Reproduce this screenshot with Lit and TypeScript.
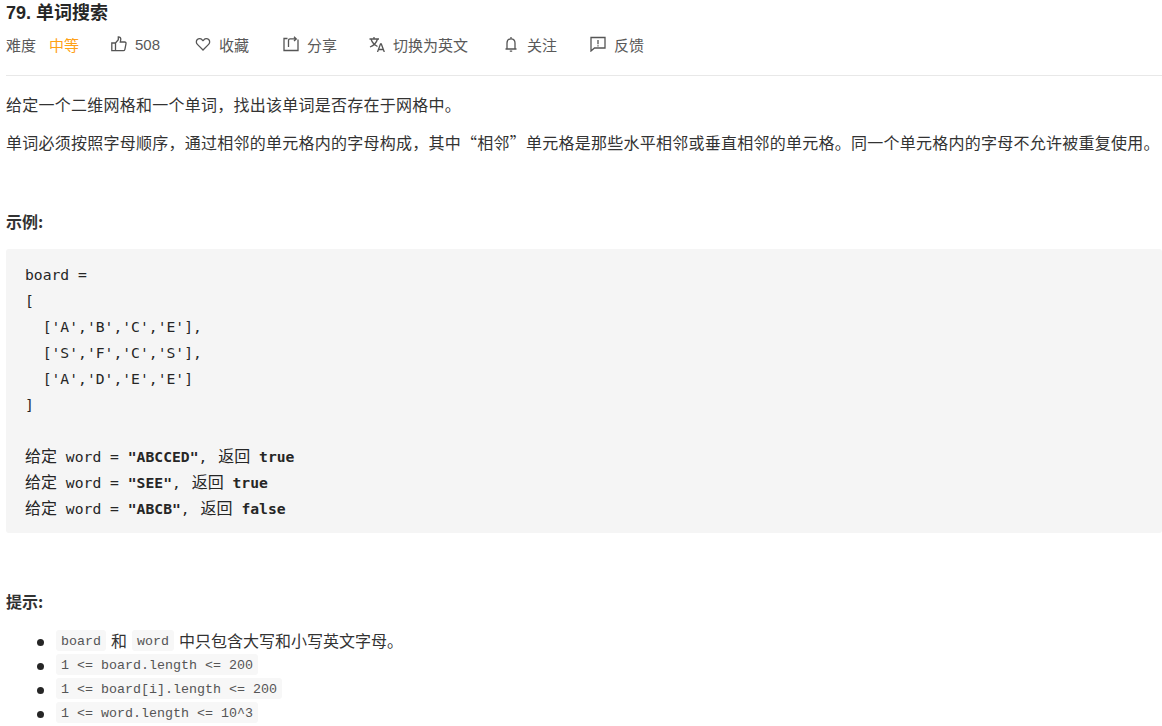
import { LitElement, html, css, svg } from "lit";
import { customElement } from "lit/decorators.js";

const icon = (body: unknown) => html`<svg class="ic" width="16" height="16" viewBox="0 0 16 16" fill="none" stroke="#555" stroke-width="1.3">${body}</svg>`;
const thumb = svg`<path d="M.8 7h3.700v7.700H.8zM4.500 7l2.800-3.300V.8c1.500 0 2.500 1 2.500 2.500L9.300 6h4.400c.9 0 1.500.8 1.300 1.600l-1.100 5.700c-.2.800-.8 1.400-1.600 1.400H4.500"/>`;
const heart = svg`<path d="M8 14 2.400 8.400C1 7 1 4.800 2.300 3.500c1.400-1.300 3.500-1.200 4.700.2L8 4.700l1-1c1.200-1.400 3.300-1.500 4.700-.2C15 4.800 15 7 13.600 8.400z"/>`;
const share = svg`<path d="M4.500 2.500H1v12h14V3.500M5.500 11V4.500c0-1 .7-1.600 1.600-1.600h5.900M11 .8l2.300 2.100L11 5"/>`;
const translate = svg`<path d="M.5 3h9.500M5 1v2M2 3c1 3.400 3.600 6 6.500 7.500M8.500 3C7.600 6.500 5 9.300 1 11M8.500 16l3-8h.8l3 8M9.700 13.500h4.600"/>`;
const bell = svg`<path d="M2.500 13h11M4 13V7c0-2.400 1.700-4.200 4-4.200s4 1.800 4 4.200v6M8 1v1.800M6.800 15.200h2.400"/>`;
const feedback = svg`<path d="M1 1.500h14V12H4.500L1 15zM8 4v4.200M8 9.300v1.300"/>`;

@customElement("app-root")
export class AppRoot extends LitElement {
  static styles = css`
    :host { display: block; height: 726px; overflow: hidden; background: #fff; padding: 0 0 0 6px; box-sizing: border-box;
      font-family: "Noto Sans CJK SC", "Liberation Sans", sans-serif; color: #333; font-size: 16px; }
    h4 { margin: 0; font-family: "Liberation Sans", "Noto Sans CJK SC", sans-serif; font-size: 18px; line-height: 26px; font-weight: 700; color: #262626; height: 26px; }
    .meta { display: flex; align-items: center; height: 24px; margin-top: 6px; color: #595959; font-size: 15px; font-family: "Liberation Sans", "Noto Sans CJK SC", sans-serif; }
    .meta .label { width: 43px; }
    .meta .level { color: #ffa116; width: 62px; }
    .item { display: flex; align-items: center; gap: 8px; }
    .ic { flex: none; }
    .i1 { width: 84px; } .i2 { width: 88px; } .i3 { width: 86px; } .i4 { width: 134px; } .i5 { width: 87px; }
    hr { border: 0; border-top: 1px solid #e8e8e8; margin: 19px 0 0; }
    p { margin: 0; line-height: 22px; letter-spacing: 0.25px; }
    .p1 { margin-top: 17px; }
    .p2 { margin-top: 16px; white-space: nowrap; }
    .head { font-weight: 700; margin-top: 57px; letter-spacing: 0; }
    pre { margin: 17px 0 0; background: #f5f5f5; border-radius: 3px; padding: 13px 19px 12px; height: 284px; box-sizing: border-box;
      font-family: "DejaVu Sans Mono", monospace; font-size: 14.7px; line-height: 26px; color: #262626; }
    pre b { font-weight: 700; }
    .cjk { font-family: "Noto Sans CJK SC", sans-serif; font-size: 16px; line-height: 1; }
    .ret { margin: 0 0 0 2px; }
    .head2 { margin-top: 57px; }
    ul { margin: 17px 0 0; padding: 0 0 0 50px; list-style: none; }
    li { line-height: 22px; height: 24px; position: relative; white-space: nowrap; display: flex; align-items: flex-start; gap: 5px; }
    li::before { content: ""; position: absolute; left: -19px; top: 9.5px; width: 7px; height: 7px; border-radius: 50%; background: #262626; }
    code { font-family: "Liberation Mono", monospace; font-size: 13.33px; line-height: 24px; height: 21px; margin-top: 1px; background: #f7f7f7; border-radius: 3px; padding: 0 5px; color: #555; }
  `;
  render() {
    return html`
      <h4>79. 单词搜索</h4>
      <div class="meta">
        <span class="label">难度</span><span class="level">中等</span>
        <span class="item i1">${icon(thumb)}<span>508</span></span>
        <span class="item i2">${icon(heart)}<span>收藏</span></span>
        <span class="item i3">${icon(share)}<span>分享</span></span>
        <span class="item i4">${icon(translate)}<span>切换为英文</span></span>
        <span class="item i5">${icon(bell)}<span>关注</span></span>
        <span class="item">${icon(feedback)}<span>反馈</span></span>
      </div>
      <hr />
      <p class="p1">给定一个二维网格和一个单词，找出该单词是否存在于网格中。</p>
      <p class="p2">单词必须按照字母顺序，通过相邻的单元格内的字母构成，其中“相邻”单元格是那些水平相邻或垂直相邻的单元格。同一个单元格内的字母不允许被重复使用。</p>
      <p class="head">示例:</p>
      <pre>board =
[
  ['A','B','C','E'],
  ['S','F','C','S'],
  ['A','D','E','E']
]

<span class="cjk">给定</span> word = <b>"ABCCED"</b>, <span class="cjk ret">返回</span> <b>true</b>
<span class="cjk">给定</span> word = <b>"SEE"</b>, <span class="cjk ret">返回</span> <b>true</b>
<span class="cjk">给定</span> word = <b>"ABCB"</b>, <span class="cjk ret">返回</span> <b>false</b></pre>
      <p class="head head2">提示:</p>
      <ul>
        <li><code>board</code><span>和</span><code>word</code><span>中只包含大写和小写英文字母。</span></li>
        <li><code>1 &lt;= board.length &lt;= 200</code></li>
        <li><code>1 &lt;= board[i].length &lt;= 200</code></li>
        <li><code>1 &lt;= word.length &lt;= 10^3</code></li>
      </ul>
    `;
  }
}
